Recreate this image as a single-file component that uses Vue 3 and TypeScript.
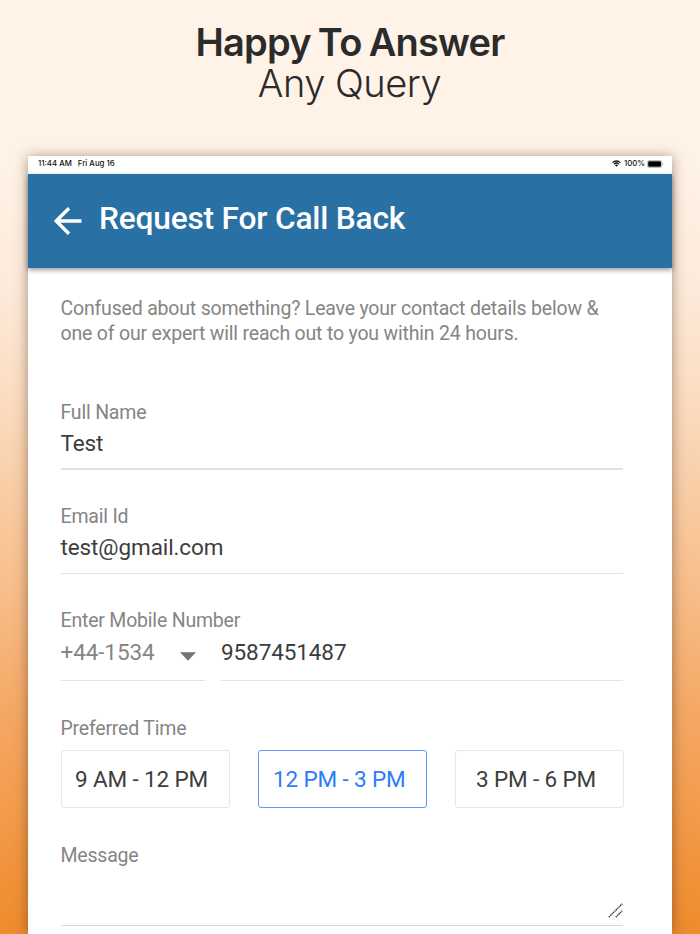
<script setup lang="ts">
import { ref } from 'vue'

const slots: string[] = ['9 AM - 12 PM', '12 PM - 3 PM', '3 PM - 6 PM']
const selected = ref(1)
</script>

<template>
  <div class="page">
    <header class="headline">
      <h1>Happy To Answer</h1>
      <p>Any Query</p>
    </header>
    <main class="tablet">
      <div class="status">
        <span>11:44 AM</span>
        <span class="date">Fri Aug 16</span>
        <svg class="wifi" viewBox="0 0 18 14" width="9" height="7" aria-hidden="true">
          <path d="M1.2 5.2a11.2 11.2 0 0 1 15.6 0M4 8.3a7.2 7.2 0 0 1 10 0" fill="none" stroke="#111" stroke-width="2.6" />
          <path d="M9 13.6 5.9 10.4a4.5 4.5 0 0 1 6.2 0z" fill="#111" />
        </svg>
        <span class="percent">100%</span>
        <svg class="battery" viewBox="0 0 17 8" width="17" height="8" aria-hidden="true">
          <rect x="0.4" y="0.4" width="14.4" height="7.2" rx="2" fill="#fff" stroke="#999" stroke-width="0.7" />
          <rect x="1.2" y="1.2" width="12.8" height="5.6" rx="1.2" fill="#000" />
          <path d="M15.6 2.8v2.4a1.4 1.4 0 0 0 0-2.4z" fill="#888" />
        </svg>
      </div>
      <div class="bar">
        <svg class="back" viewBox="0 0 28 28" width="28" height="28" aria-hidden="true">
          <path d="M15 1.2 2.2 14 15 26.8M2.2 14H27.5" fill="none" stroke="#fff" stroke-width="3.4" />
        </svg>
        <h2>Request For Call Back</h2>
      </div>
      <form class="form" @submit.prevent>
        <p class="intro">
          Confused about something? Leave your contact details below &amp;<br />
          one of our expert will reach out to you within 24 hours.
        </p>
        <div class="field name">
          <label>Full Name</label>
          <div class="value">Test</div>
        </div>
        <div class="field email">
          <label>Email Id</label>
          <div class="value">test@gmail.com</div>
        </div>
        <div class="field phone">
          <label>Enter Mobile Number</label>
          <div class="phone-row">
            <div class="value code">
              <span>+44-1534</span>
              <svg viewBox="0 0 16 9" width="16" height="9" aria-hidden="true"><path d="M0 .3h16L8 8.7z" fill="#757575" /></svg>
            </div>
            <div class="value number">9587451487</div>
          </div>
        </div>
        <div class="field time">
          <label>Preferred Time</label>
          <div class="slots">
            <button
              v-for="(slot, i) in slots"
              :key="slot"
              type="button"
              :class="{ active: selected === i }"
              @click="selected = i"
            >{{ slot }}</button>
          </div>
        </div>
        <div class="field message">
          <label>Message</label>
          <div class="area">
            <svg viewBox="0 0 15 15" width="15" height="15" aria-hidden="true">
              <path d="M.8 14.2 14.2 .8M7.8 14.2 14.2 7.8" fill="none" stroke="#444" stroke-width="1.5" stroke-dasharray="1.4 .6" />
            </svg>
          </div>
        </div>
      </form>
    </main>
  </div>
</template>

<style>
body {
  margin: 0;
  overflow: hidden;
}
</style>

<style scoped>
* {
  box-sizing: border-box;
}
.page {
  height: 934px;
  padding: 0 28px;
  overflow: hidden;
  display: flex;
  flex-direction: column;
  background: linear-gradient(#fff2e6 0, #fff2e6 170px, #fdeada 290px, #fbdcc0 400px, #f7bc87 600px, #f5aa68 700px, #f08c2e 925px);
  font-family: Roboto, sans-serif;
}
.headline {
  height: 156px;
  flex: none;
  padding-top: 22px;
  text-align: center;
  font-family: Inter, sans-serif;
  color: #2b2b2b;
}
.headline h1,
.headline p {
  margin: 0;
  font-size: 38px;
  line-height: 40px;
  white-space: nowrap;
}
.headline h1 {
  font-weight: 600;
  letter-spacing: -0.8px;
  word-spacing: -1.6px;
}
.headline p {
  margin-top: 1px;
  padding-right: 1px;
  font-weight: 300;
  letter-spacing: -0.5px;
}
.tablet {
  width: 643.5px;
  flex: 1;
  background: #fff;
  box-shadow: 0 1px 12px rgba(70, 45, 30, 0.5);
}
.status {
  height: 17.5px;
  padding: 0 8px 2px 10px;
  display: flex;
  align-items: center;
  font: 500 7.8px/15px Inter, sans-serif;
  color: #111;
}
.date {
  margin-left: 6px;
}
.wifi {
  margin-left: auto;
}
.percent {
  margin: 0 1.5px 0 3px;
}
.bar {
  height: 94px;
  padding: 0 26px;
  display: flex;
  align-items: center;
  background: #2970a5;
  box-shadow: 0 2px 5px rgba(0, 0, 0, 0.4);
}
.back {
  margin-top: 1px;
}
.bar h2 {
  margin: 0 0 4px 17px;
  font-size: 31.7px;
  line-height: 40px;
  font-weight: 500;
  letter-spacing: -0.2px;
  color: #fff;
  white-space: nowrap;
}
.form {
  padding: 28px 49px 0 32.5px;
}
.intro {
  margin: 0;
  font-size: 19.5px;
  line-height: 25px;
  letter-spacing: -0.19px;
  color: #858585;
  white-space: nowrap;
}
label {
  display: block;
  font-size: 19.5px;
  line-height: 24px;
  letter-spacing: -0.2px;
  color: #858585;
}
.value {
  height: 45px;
  padding-top: 4px;
  font-size: 22.5px;
  line-height: 28px;
  letter-spacing: -0.1px;
  color: #3d3d3d;
  border-bottom: 1px solid #e2e2e2;
}
.name {
  height: 104px;
  margin-top: 55.5px;
}
.name .value {
  border-bottom-width: 2px;
}
.email {
  height: 104px;
}
.email .value {
  height: 44.5px;
}
.phone {
  height: 108px;
}
.phone-row {
  display: flex;
  gap: 16px;
}
.phone-row .value {
  height: 48px;
  padding-top: 5px;
}
.code {
  width: 144.5px;
  display: flex;
  color: #858585;
}
.code svg {
  margin: 14px 9.5px 0 auto;
}
.phone-row .number {
  flex: 1;
}
.slots {
  margin: 8.5px -1.5px 0 0;
  display: flex;
  justify-content: space-between;
}
.slots button {
  width: 169px;
  height: 58px;
  padding: 0 7px 0 0;
  border: 1px solid #e6e6e6;
  border-radius: 3px;
  background: #fff;
  font: 400 22.5px/28px Roboto, sans-serif;
  letter-spacing: -0.12px;
  color: #3d3d3d;
}
.slots .active {
  margin-left: 1px;
  border-color: #5c98fa;
  color: #2b7cf6;
}
.message {
  margin-top: 36px;
}
.area {
  height: 58px;
  display: flex;
  align-items: flex-end;
  justify-content: flex-end;
  padding-bottom: 7px;
  border-bottom: 1px solid #d8d8d8;
}
</style>
